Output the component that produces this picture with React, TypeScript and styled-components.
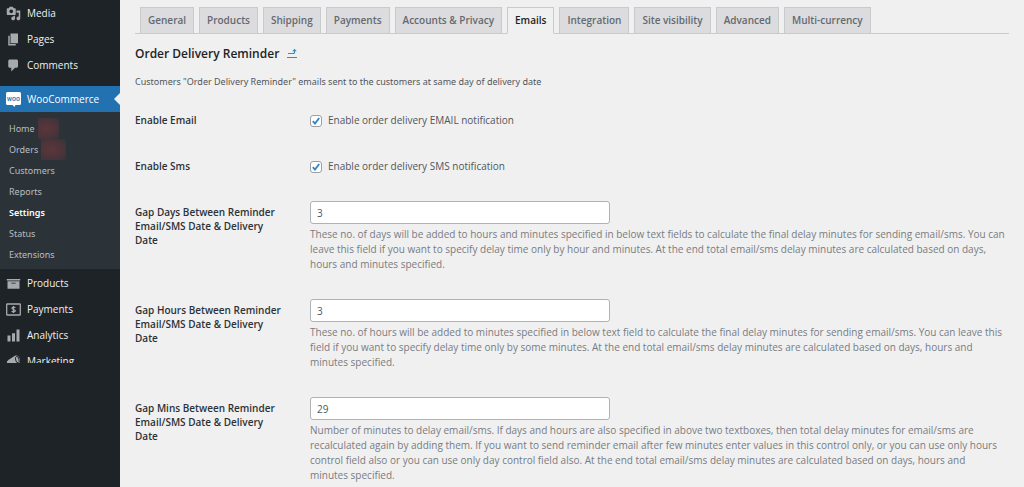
import React from "react";
import styled, { createGlobalStyle } from "styled-components";

const GlobalStyle = createGlobalStyle`
  *, *::before, *::after { box-sizing: border-box; }
  body {
    margin: 0;
    background: #f0f0f0;
    color: #50565c;
    font-family: "Open Sans", "Noto Sans", sans-serif;
    font-size: 10px;
    line-height: 15px;
  }
`;

const Page = styled.div`
  display: flex;
  min-height: 100vh;
`;

const Sidebar = styled.nav`
  flex: none;
  width: 120px;
  background: #1d2327;
`;

const MenuList = styled.ul`
  list-style: none;
  margin: 0;
  padding: 0;
`;

const MenuItem = styled.li<{ $clipped?: boolean }>`
  height: ${(p) => (p.$clipped ? "15px" : "auto")};
  overflow: ${(p) => (p.$clipped ? "hidden" : "visible")};
`;

const MenuLink = styled.a<{ $current?: boolean }>`
  position: relative;
  display: flex;
  align-items: center;
  gap: 6px;
  height: 26px;
  padding-left: 6px;
  margin-top: ${(p) => (p.$current ? "8px" : "0")};
  background: ${(p) => (p.$current ? "#2271b1" : "transparent")};
  color: ${(p) => (p.$current ? "#fff" : "#f0f0f1")};
  text-decoration: none;

  svg {
    flex: none;
    color: ${(p) => (p.$current ? "#fff" : "#a7aaad")};
  }
`;

const Pointer = styled.span`
  position: absolute;
  right: 0;
  top: 7px;
  border: 6px solid transparent;
  border-left-width: 0;
  border-right-color: #f0f0f0;
`;

const SubMenu = styled.ul`
  list-style: none;
  margin: 0 0 1px;
  padding: 6px 0 4px;
  background: #2c3338;
`;

const SubItem = styled.li`
  display: flex;
  align-items: stretch;
  gap: 3px;
  height: 21px;
  padding-left: 9px;
`;

const SubLink = styled.a<{ $current?: boolean }>`
  color: ${(p) => (p.$current ? "#fff" : "#b9bdc1")};
  font-family: "Noto Sans", sans-serif;
  font-size: 9px;
  font-weight: ${(p) => (p.$current ? 600 : 400)};
  line-height: 21px;
  text-decoration: none;
`;

const Smudge = styled.span<{ $width: number }>`
  width: ${(p) => p.$width}px;
  background: radial-gradient(ellipse at 40% 50%, #5c363b 0%, #4c343a 55%, #33343a 100%);
`;

const Main = styled.main`
  flex: 1;
  min-width: 0;
  padding: 7px 15px 0;
`;

const Tabs = styled.nav`
  display: flex;
  gap: 5px;
  padding-left: 5px;
  border-bottom: 1px solid #c9cacc;
`;

const Tab = styled.a<{ $active?: boolean }>`
  height: 27px;
  margin-bottom: -1px;
  padding: 0 7px;
  border: 1px solid #c9cacc;
  border-bottom-color: ${(p) => (p.$active ? "#f0f0f0" : "#c9cacc")};
  background: ${(p) => (p.$active ? "#f0f0f0" : "#dcdcde")};
  color: ${(p) => (p.$active ? "#1d2327" : "#646970")};
  font-weight: 600;
  line-height: 25px;
  white-space: nowrap;
  text-decoration: none;
`;

const Title = styled.h2`
  display: flex;
  align-items: center;
  gap: 8px;
  margin: 10px 0 11px;
  color: #1d2327;
  font-size: 12px;
  font-weight: 600;
  line-height: 19px;
`;

const BackLink = styled.a`
  display: flex;
  color: #2e8fd0;
`;

const Intro = styled.p`
  margin: 0 0 9px;
  font-family: "Noto Sans", sans-serif;
  font-size: 9px;
`;

const FormTable = styled.table`
  width: 100%;
  border-collapse: collapse;
`;

const LabelCell = styled.th`
  width: 165px;
  padding: 15px 18px 16px 0;
  color: #2c3237;
  font-weight: 600;
  line-height: 14px;
  text-align: left;
  vertical-align: top;
`;

const FieldCell = styled.td<{ $tall?: boolean }>`
  padding: ${(p) => (p.$tall ? "11px 4px 16px 10px" : "15px 4px 16px 10px")};
  vertical-align: top;

  tr:last-child > & {
    padding-bottom: 0;
  }
`;

const CheckLabel = styled.label`
  display: flex;
  align-items: center;
  gap: 6px;
`;

const CheckHolder = styled.span`
  display: grid;
  width: 12px;
  height: 12px;

  > * {
    grid-area: 1 / 1;
  }

  svg {
    pointer-events: none;
    visibility: hidden;
  }

  input:checked + svg {
    visibility: visible;
  }
`;

const CheckInput = styled.input`
  appearance: none;
  width: 12px;
  height: 12px;
  margin: 0;
  border: 1px solid #9b9ea3;
  border-radius: 3px;
  background: #fff;
`;

const TextInput = styled.input`
  display: block;
  width: 300px;
  max-width: 100%;
  height: 23px;
  padding: 0 6px;
  border: 1px solid #b0b1b5;
  border-radius: 3px;
  background: #fff;
  color: #50575e;
  font: inherit;
`;

const Help = styled.p`
  margin: 3px 0 0;
  color: #787c82;
`;

const DashIcon = ({ d }: { d: string }) => (
  <svg width="15" height="15" viewBox="0 0 20 20" fill="currentColor" fillRule="evenodd" aria-hidden="true">
    <path d={d} />
  </svg>
);

const WooIcon = () => (
  <svg width="15" height="15" viewBox="0 0 15 15" aria-hidden="true">
    <path d="M1.500 0h12A1.500 1.500 0 0 1 15 1.500v10a1.500 1.500 0 0 1-1.500 1.500H9.500L8.500 15 6.500 13h-5A1.500 1.500 0 0 1 0 11.500v-10A1.500 1.500 0 0 1 1.500 0z" fill="#fff" />
    <text x="7.500" y="8.500" textAnchor="middle" fontSize="5" fontWeight="700" fill="#2271b1">WOO</text>
  </svg>
);

const PaymentsIcon = () => (
  <svg width="15" height="15" viewBox="0 0 15 15" fill="none" stroke="currentColor" aria-hidden="true">
    <rect x=".7" y="2" width="13.600" height="11" rx=".6" strokeWidth="1.300" />
    <path d="M9.300 5.700C8.900 5 6 4.700 5.900 6.200c0 1.500 3.400 1 3.400 2.600 0 1.400-3 1.300-3.600.4M7.500 4v7" strokeWidth="1.200" />
  </svg>
);

const MarketingIcon = () => (
  <svg width="15" height="15" viewBox="0 0 15 15" aria-hidden="true">
    <path d="M1.200 7.200C2.500 5.500 6.500 3.500 9 1.800 11 .6 13.500 2.500 13.900 5.500c.4 2.600-.6 4.500-2.400 4.500H3C1 10 .4 8.600 1.200 7.200z" fill="currentColor" />
    <path d="M4 10h3l1.500 4H5z" fill="currentColor" />
    <ellipse cx="11.300" cy="5.600" rx="1.700" ry="3.200" transform="rotate(-14 11.300 5.600)" fill="none" stroke="#1d2327" strokeWidth=".9" />
  </svg>
);

const ICONS = {
  media:
    "M13 11V4c0-.55-.45-1-1-1h-1.670L9 1H5L3.670 3H2c-.55 0-1 .45-1 1v7c0 .55.45 1 1 1h10c.55 0 1-.45 1-1zM7 4.500c1.380 0 2.500 1.120 2.500 2.500S8.380 9.500 7 9.500 4.500 8.380 4.500 7 5.620 4.500 7 4.500zM14 6h5v10.500c0 1.380-1.120 2.500-2.500 2.500S14 17.880 14 16.500s1.120-2.500 2.500-2.500c.17 0 .34.02.5.05V9h-3V6zm-4 8.050V13h2v3.500c0 1.380-1.120 2.500-2.500 2.500S7 17.880 7 16.500 8.120 14 9.500 14c.17 0 .34.02.5.05z",
  pages: "M6 15V2h10v13H6zm-1 1h8v2H3V5h2v11z",
  comments: "M5 2h9c1.100 0 2 .9 2 2v7c0 1.100-.9 2-2 2h-2l-5 5v-5H5c-1.100 0-2-.9-2-2V4c0-1.100.9-2 2-2z",
  products: "M19 4v2H1V4h18zM2 7h16v10H2V7zm11 3V9H7v1h6z",
  analytics: "M18 18V2h-4v16h4zm-6 0V7H8v11h4zm-6 0v-8H2v8h4z",
};

const SUBMENU: { label: string; smudge?: number; current?: boolean }[] = [
  { label: "Home", smudge: 21 },
  { label: "Orders", smudge: 25 },
  { label: "Customers" },
  { label: "Reports" },
  { label: "Settings", current: true },
  { label: "Status" },
  { label: "Extensions" },
];

const TABS = [
  "General",
  "Products",
  "Shipping",
  "Payments",
  "Accounts & Privacy",
  "Emails",
  "Integration",
  "Site visibility",
  "Advanced",
  "Multi-currency",
];

const CHECKS = [
  { id: "enable-email", label: "Enable Email", text: "Enable order delivery EMAIL notification" },
  { id: "enable-sms", label: "Enable Sms", text: "Enable order delivery SMS notification" },
];

const GAPS = [
  {
    id: "gap-days",
    label: "Gap Days Between Reminder Email/SMS Date & Delivery Date",
    value: "3",
    help: "These no. of days will be added to hours and minutes specified in below text fields to calculate the final delay minutes for sending email/sms. You can leave this field if you want to specify delay time only by hour and minutes. At the end total email/sms delay minutes are calculated based on days, hours and minutes specified.",
  },
  {
    id: "gap-hours",
    label: "Gap Hours Between Reminder Email/SMS Date & Delivery Date",
    value: "3",
    help: "These no. of hours will be added to minutes specified in below text field to calculate the final delay minutes for sending email/sms. You can leave this field if you want to specify delay time only by some minutes. At the end total email/sms delay minutes are calculated based on days, hours and minutes specified.",
  },
  {
    id: "gap-mins",
    label: "Gap Mins Between Reminder Email/SMS Date & Delivery Date",
    value: "29",
    help: "Number of minutes to delay email/sms. If days and hours are also specified in above two textboxes, then total delay minutes for email/sms are recalculated again by adding them. If you want to send reminder email after few minutes enter values in this control only, or you can use only hours control field also or you can use only day control field also. At the end total email/sms delay minutes are calculated based on days, hours and minutes specified.",
  },
];

export default function App() {
  return (
    <Page>
      <GlobalStyle />
      <Sidebar aria-label="Admin menu">
        <MenuList>
          <MenuItem><MenuLink href="#media"><DashIcon d={ICONS.media} />Media</MenuLink></MenuItem>
          <MenuItem><MenuLink href="#pages"><DashIcon d={ICONS.pages} />Pages</MenuLink></MenuItem>
          <MenuItem><MenuLink href="#comments"><DashIcon d={ICONS.comments} />Comments</MenuLink></MenuItem>
          <MenuItem>
            <MenuLink href="#woocommerce" $current><WooIcon />WooCommerce<Pointer /></MenuLink>
            <SubMenu>
              {SUBMENU.map((s) => (
                <SubItem key={s.label}>
                  <SubLink href={"#" + s.label.toLowerCase()} $current={s.current}>{s.label}</SubLink>
                  {s.smudge && <Smudge $width={s.smudge} />}
                </SubItem>
              ))}
            </SubMenu>
          </MenuItem>
          <MenuItem><MenuLink href="#products"><DashIcon d={ICONS.products} />Products</MenuLink></MenuItem>
          <MenuItem><MenuLink href="#payments"><PaymentsIcon />Payments</MenuLink></MenuItem>
          <MenuItem><MenuLink href="#analytics"><DashIcon d={ICONS.analytics} />Analytics</MenuLink></MenuItem>
          <MenuItem $clipped><MenuLink href="#marketing"><MarketingIcon />Marketing</MenuLink></MenuItem>
        </MenuList>
      </Sidebar>

      <Main>
        <Tabs aria-label="Settings sections">
          {TABS.map((t) => (
            <Tab key={t} href="#tab" $active={t === "Emails"}>{t}</Tab>
          ))}
        </Tabs>

        <Title>
          Order Delivery Reminder
          <BackLink href="#emails" aria-label="Return to emails">
            <svg width="10" height="11" viewBox="0 0 10 11" fill="none" stroke="currentColor" aria-hidden="true">
              <path d="M1 5.500h5.500q1 0 1-1V2.500" strokeWidth="1.200" />
              <path d="M5.200 3.300L7.500.8l2.300 2.500z" fill="currentColor" stroke="none" />
              <path d="M0 9.500h10" />
            </svg>
          </BackLink>
        </Title>
        <Intro>Customers "Order Delivery Reminder" emails sent to the customers at same day of delivery date</Intro>

        <FormTable>
          <tbody>
            {CHECKS.map((c) => (
              <tr key={c.id}>
                <LabelCell scope="row">{c.label}</LabelCell>
                <FieldCell>
                  <CheckLabel>
                    <CheckHolder>
                      <CheckInput type="checkbox" id={c.id} defaultChecked />
                      <svg width="12" height="12" viewBox="0 0 12 12" fill="none" stroke="#3582c4" strokeWidth="1.800" aria-hidden="true">
                        <path d="M2.800 6.200L5 8.600 9.200 3" />
                      </svg>
                    </CheckHolder>
                    {c.text}
                  </CheckLabel>
                </FieldCell>
              </tr>
            ))}
            {GAPS.map((g) => (
              <tr key={g.id}>
                <LabelCell scope="row"><label htmlFor={g.id}>{g.label}</label></LabelCell>
                <FieldCell $tall>
                  <TextInput type="text" id={g.id} defaultValue={g.value} />
                  <Help>{g.help}</Help>
                </FieldCell>
              </tr>
            ))}
          </tbody>
        </FormTable>
      </Main>
    </Page>
  );
}
